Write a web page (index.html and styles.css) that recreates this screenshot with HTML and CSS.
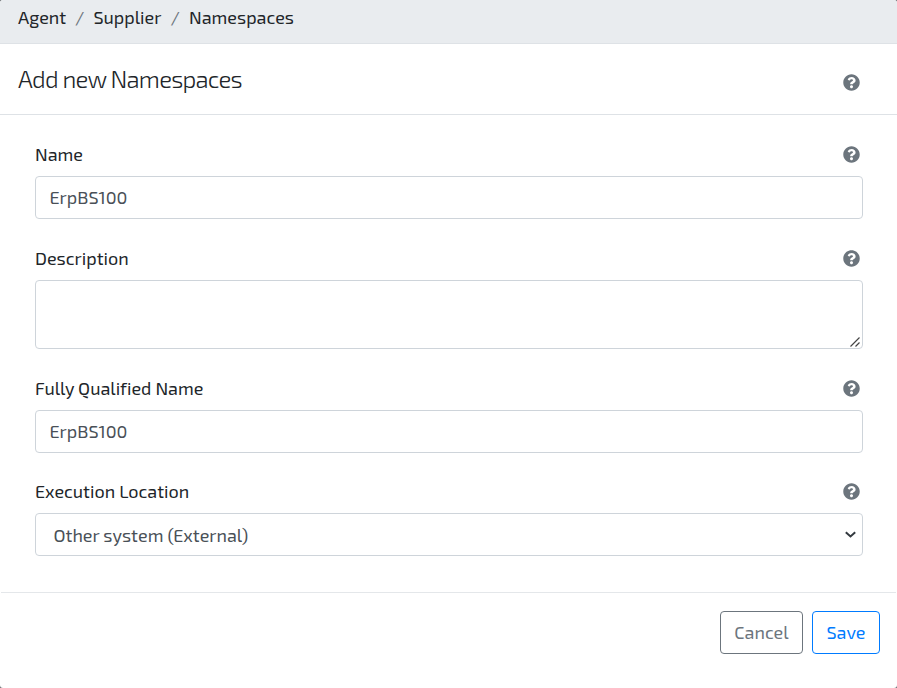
FILE: index.html
```html
<!DOCTYPE html>
<html lang="en">
<head>
<meta charset="utf-8">
<title>Add new Namespaces</title>
<link rel="stylesheet" href="styles.css">
</head>
<body>
<svg class="sprite" width="0" height="0" aria-hidden="true">
  <symbol id="help" viewBox="0 0 512 512"><path fill="currentColor" d="M504 256c0 136.997-111.043 248-248 248S8 392.997 8 256C8 119.083 119.043 8 256 8s248 111.083 248 248zM262.655 90c-54.497 0-89.255 22.957-116.549 63.758-3.536 5.286-2.353 12.415 2.715 16.258l34.699 26.31c5.205 3.947 12.621 3.008 16.665-2.122 17.864-22.658 30.113-35.797 57.303-35.797 20.429 0 45.698 13.148 45.698 32.958 0 14.976-12.363 22.667-32.534 33.976C247.128 238.528 216 254.941 216 296v4c0 6.627 5.373 12 12 12h56c6.627 0 12-5.373 12-12v-1.333c0-28.462 83.186-29.647 83.186-106.667 0-58.002-60.165-102-116.531-102zM256 338c-25.365 0-46 20.635-46 46 0 25.364 20.635 46 46 46s46-20.636 46-46c0-25.365-20.635-46-46-46z"/></symbol>
</svg>
<div class="modal">
  <nav class="breadcrumb">
    <span class="crumb-agent">Agent</span><span class="slash">/</span><span class="crumb-supplier">Supplier</span><span class="slash">/</span><span>Namespaces</span>
  </nav>
  <header class="header">
    <h1 class="title">Add new Namespaces</h1>
    <svg class="help"><use href="#help"/></svg>
  </header>
  <form class="form">
    <div class="field">
      <div class="label-row"><label for="name">Name</label><svg class="help"><use href="#help"/></svg></div>
      <input class="control" id="name" value="ErpBS100">
    </div>
    <div class="field">
      <div class="label-row"><label>Description</label><svg class="help"><use href="#help"/></svg></div>
      <div class="control area"><svg class="grip" viewBox="0 0 10 10"><path d="M0.5 9.5 9.5 0.5M5.5 9.5 9.5 5.5"/></svg></div>
    </div>
    <div class="field field-qualified">
      <div class="label-row"><label for="fqn">Fully Qualified Name</label><svg class="help"><use href="#help"/></svg></div>
      <input class="control" id="fqn" value="ErpBS100">
    </div>
    <div class="field">
      <div class="label-row"><label>Execution Location</label><svg class="help"><use href="#help"/></svg></div>
      <div class="control select"><span>Other system (External)</span><svg class="chevron" viewBox="0 0 11 7"><path d="M0.8 1.2 5.5 5.4 10.2 1.2"/></svg></div>
    </div>
  </form>
  <footer class="footer">
    <button class="btn cancel" type="button">Cancel</button>
    <button class="btn save" type="button">Save</button>
  </footer>
</div>
</body>
</html>
```

FILE: styles.css
```css
* { box-sizing: border-box; }
body {
  margin: 0;
  background: #6c6f72;
  font-family: "Exo 2", "Open Sans", "Noto Sans", sans-serif;
  font-size: 18px;
  font-weight: 380;
  font-variant-ligatures: none;
  line-height: 27px;
  color: #212529;
}
.sprite { position: absolute; }
.modal {
  height: 688px;
  background: #fff;
  border-radius: 3px;
  overflow: hidden;
}
.breadcrumb {
  display: flex;
  height: 44px;
  padding: 4px 18px 0;
  background: #e9ecef;
  border-bottom: 1px solid #dee2e6;
  white-space: nowrap;
}
.crumb-agent { width: 48px; }
.crumb-supplier { width: 68px; }
.slash { width: 27.5px; text-align: center; color: #6c757d; }
.header {
  display: flex;
  justify-content: space-between;
  align-items: center;
  height: 71px;
  padding: 0 37px 0 18px;
  border-bottom: 1px solid #dee2e6;
}
.title {
  margin: 0;
  font-size: 24px;
  font-weight: 350;
  letter-spacing: -0.77px;
  line-height: 34px;
}
.help { width: 17px; height: 17px; color: #6c757d; display: block; }
.header .help { margin-top: 6px; }
.form { height: 478px; margin: 0 1px; padding: 26px 33px 0 34px; border-bottom: 1px solid #e4e7ea; }
.field { margin-bottom: 26px; }
.label-row {
  display: flex;
  justify-content: space-between;
  align-items: center;
  height: 27px;
  margin-bottom: 8px;
  padding-right: 3px;
}
.control {
  display: block;
  width: 100%;
  height: 43px;
  padding: 0 13.5px 1px;
  border: 1px solid #ced4da;
  border-radius: 4px;
  background: #fff;
  color: #495057;
  font: inherit;
  outline: none;
}
.area { position: relative; height: 69px; }
.field-qualified { margin-bottom: 25px; }
.grip {
  position: absolute;
  right: 2px;
  bottom: 1px;
  width: 10px;
  height: 10px;
  fill: none;
  stroke: #444;
  stroke-width: 1.2;
}
.select {
  display: flex;
  align-items: center;
  justify-content: space-between;
  padding: 0 6px 0 17.5px;
}
.select span { padding-top: 2px; }
.chevron { width: 11px; height: 7px; fill: none; stroke: #343a40; stroke-width: 2; }
.footer {
  display: flex;
  justify-content: flex-end;
  gap: 9px;
  padding: 18px 17px 0 0;
}
.btn {
  height: 43px;
  padding: 0;
  border: 1px solid #6c757d;
  border-radius: 4px;
  background: #fff;
  color: #6c757d;
  font: inherit;
}
.cancel { width: 83px; }
.save { width: 68px; border-color: #007bff; color: #007bff; }
```
